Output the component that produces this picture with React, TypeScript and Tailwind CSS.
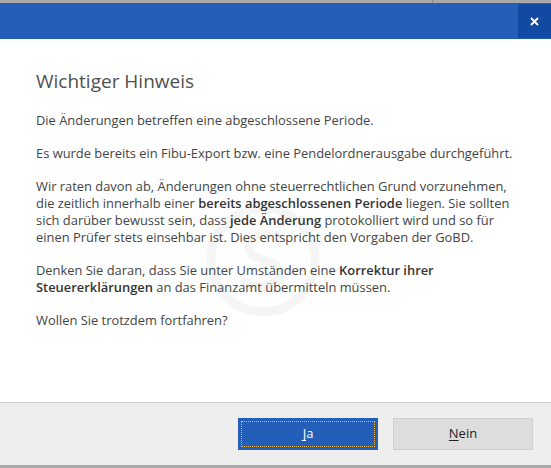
import type { ReactNode } from "react";

function B({ children }: { children: ReactNode }) {
  return <span className="font-semibold text-[#333]">{children}</span>;
}

function Watermark() {
  return (
    <svg
      className="pointer-events-none absolute left-[205px] top-[163px]"
      width="116"
      height="116"
      viewBox="0 0 116 116"
    >
      <circle cx="58" cy="58" r="52" fill="none" stroke="#f5f5f5" strokeWidth="9" />
      <path
        d="M74 36 C60 28 40 34 44 48 C48 60 72 56 74 70 C76 84 54 90 40 80"
        fill="none"
        stroke="#f5f5f5"
        strokeWidth="9"
        strokeLinecap="round"
      />
    </svg>
  );
}

export default function App() {
  return (
    <div
      className="flex h-[468px] w-[551px] flex-col overflow-hidden bg-white text-[12.9px] text-[#444]"
      style={{ fontFamily: '"Open Sans", "Noto Sans", sans-serif' }}
    >
      <div className="relative h-[3px] bg-[#a9a9a9]">
        <div className="absolute left-[432px] top-0 h-[3px] w-px bg-[#8a8a8a]" />
      </div>
      <div className="flex h-[36px] items-stretch justify-end bg-[#235eb8]">
        <div className="my-px flex w-[33px] items-center justify-center bg-[#1249a2]">
          <svg width="9" height="9" viewBox="0 0 9 9">
            <path d="M1 1 L8 8 M8 1 L1 8" stroke="#fff" strokeWidth="1.8" />
          </svg>
        </div>
      </div>

      <div className="relative flex-1 px-[36px] pt-[29px]">
        <Watermark />
        <div className="relative">
          <h1 className="mb-[18px] text-[19px] font-medium leading-[26px] text-[#505050]">
            Wichtiger Hinweis
          </h1>
          <div className="flex flex-col gap-[16px] whitespace-nowrap leading-[17px]">
            <p>Die Änderungen betreffen eine abgeschlossene Periode.</p>
            <p>Es wurde bereits ein Fibu-Export bzw. eine Pendelordnerausgabe durchgeführt.</p>
            <p>
              Wir raten davon ab, Änderungen ohne steuerrechtlichen Grund vorzunehmen,
              <br />
              die zeitlich innerhalb einer <B>bereits abgeschlossenen Periode</B> liegen. Sie sollten
              <br />
              sich darüber bewusst sein, dass <B>jede Änderung</B> protokolliert wird und so für
              <br />
              einen Prüfer stets einsehbar ist. Dies entspricht den Vorgaben der GoBD.
            </p>
            <p>
              Denken Sie daran, dass Sie unter Umständen eine <B>Korrektur ihrer</B>
              <br />
              <B>Steuererklärungen</B> an das Finanzamt übermitteln müssen.
            </p>
            <p>Wollen Sie trotzdem fortfahren?</p>
          </div>
        </div>
      </div>

      <div className="flex h-[63px] items-center justify-end gap-[15px] border-t border-[#d0d0d0] bg-[#eeeeee] pr-[18px]">
        <button className="flex h-[32px] w-[140px] items-center justify-center bg-[#235eb8] p-[3px] text-[13px] text-white">
          <span className="flex h-full w-full items-center justify-center border border-dotted border-[#e8b04a]">
            <span className="underline underline-offset-2">J</span>a
          </span>
        </button>
        <button className="h-[32px] w-[140px] border border-[#cfcfcf] bg-[#dddddd] text-[13px] text-[#222]">
          <span className="underline underline-offset-2">N</span>ein
        </button>
      </div>
      <div className="h-[3px] bg-[#a9a9a9]" />
    </div>
  );
}
